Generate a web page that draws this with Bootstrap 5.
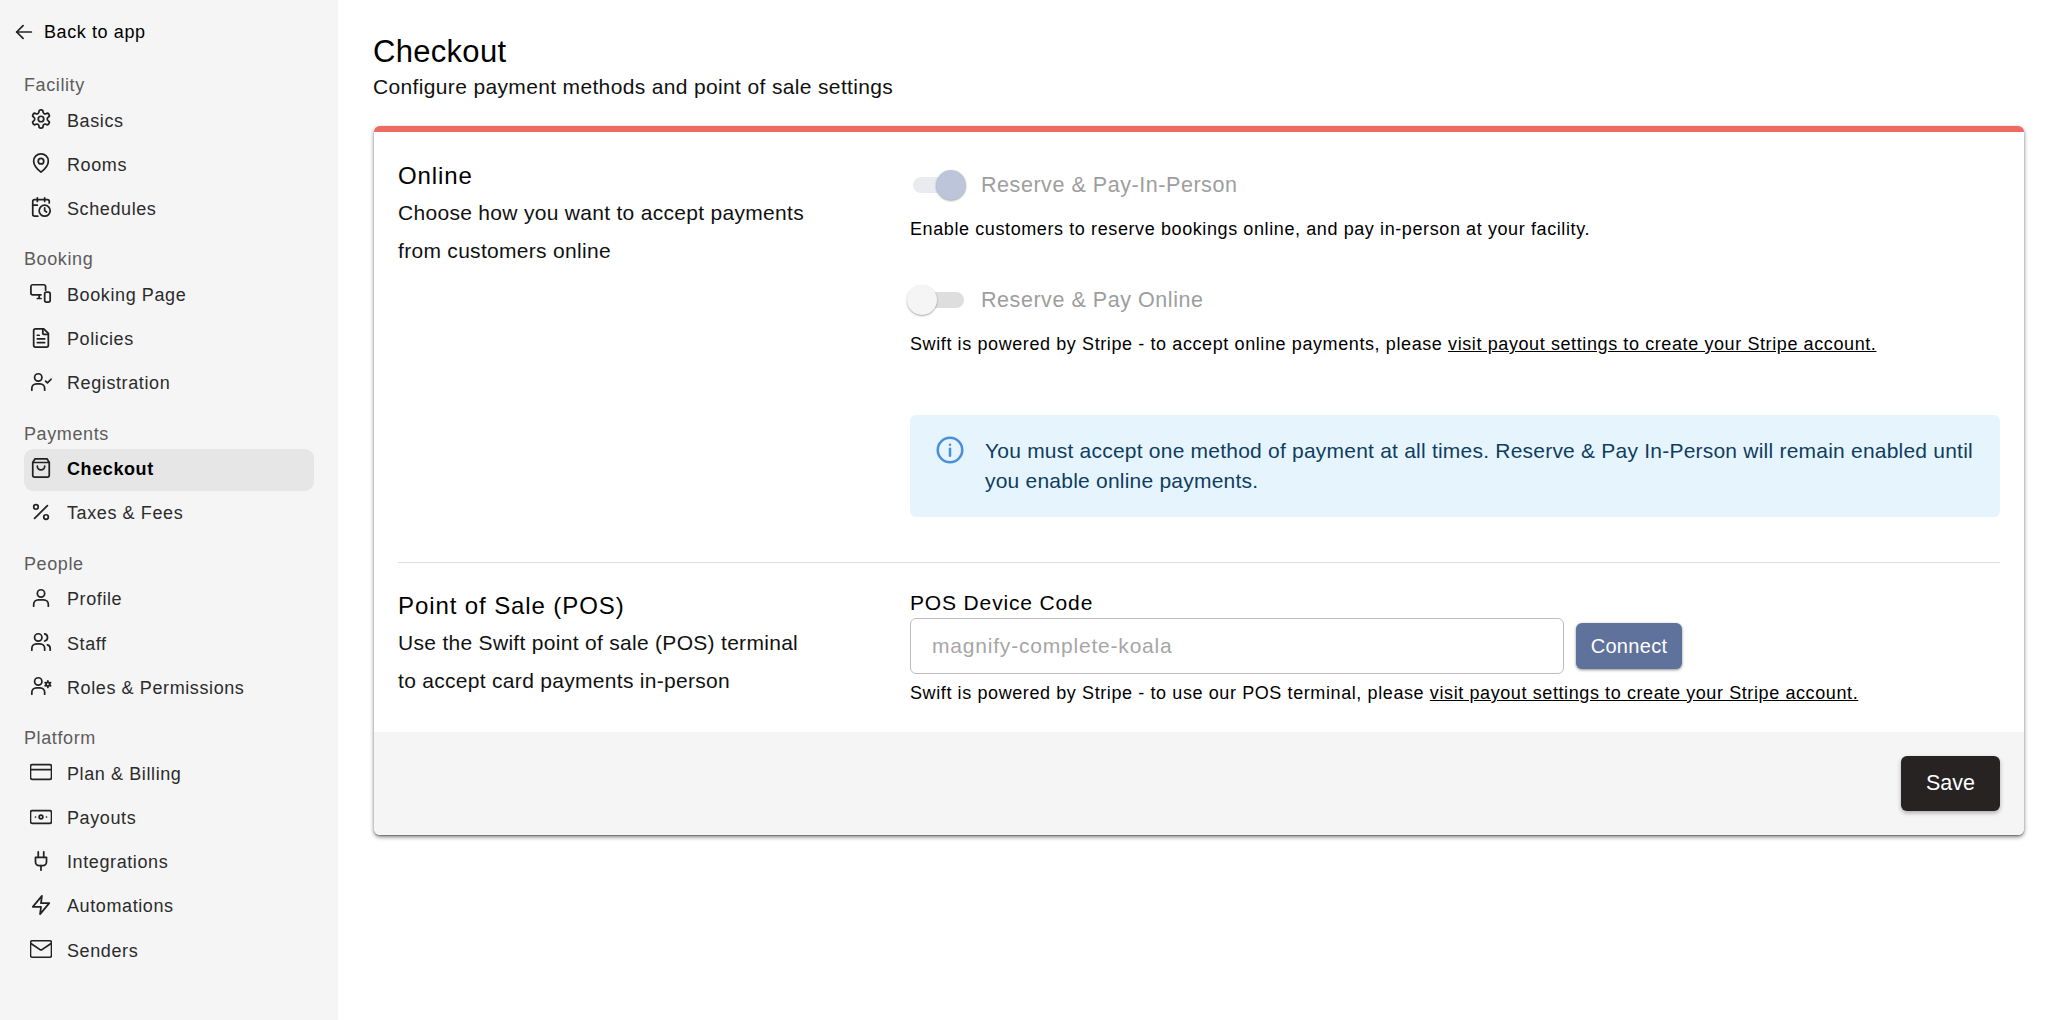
<!DOCTYPE html>
<html lang="en">
<head>
<meta charset="utf-8">
<title>Checkout</title>
<link href="https://cdn.jsdelivr.net/npm/bootstrap@5.3.0/dist/css/bootstrap.min.css" rel="stylesheet">
<style>
html,body{height:100%}
body{font-family:"Liberation Sans",Arial,sans-serif;color:#000;letter-spacing:.3px;background:#fff;overflow:hidden}
.shell{height:1020px}
.side{width:338px;flex:none;background:#f5f5f5;padding:21px 24px 0 0;height:1020px}
.backlink{display:flex;align-items:center;height:22px;margin-left:13px;color:#000;text-decoration:none;font-size:18px;letter-spacing:.6px}
.backlink svg{width:22px;height:22px;margin-right:9px}
.grp-title{margin:17px 0 0 24px;font-size:18px;letter-spacing:.6px;line-height:24px;color:#5c5c5c;height:24px}
.grp-title.first{margin-top:30px}
.side-item{display:flex;align-items:center;height:42px;margin:2.2px 0 0 24px;padding-left:6px;border-radius:9px;color:#2b2b2b;font-size:18px;letter-spacing:.6px;text-decoration:none}
.grp-title+.side-item{margin-top:3px}
.side-item svg{width:22px;height:22px;margin-right:15px;flex:none;position:relative;top:-2px}
.side-item.on{background:#e6e6e6;color:#000;font-weight:700}
.maincol{padding:32px 28px 0 35px;min-width:0}
.pg-title{font-size:31px;line-height:40px;margin:0;font-weight:400;letter-spacing:.3px}
.pg-sub{font-size:21px;line-height:28px;margin:1px 0 0;letter-spacing:.35px;color:#111}
.panel{margin:25px 0 0 1px;height:709px;border:0;border-radius:6px;border-top:6px solid #ee6a5f;box-shadow:0 2px 4px rgba(0,0,0,.5),0 1px 1px rgba(0,0,0,.25);overflow:hidden;background:#fff}
.panel-body{padding:24px 24px 0;height:600px}
.lcol{width:512px;flex:none}
.sec-h{font-size:24px;line-height:32px;margin:4px 0 0;font-weight:400;letter-spacing:.9px}
.sec-d{font-size:21px;line-height:38px;margin:2px 0 0;letter-spacing:.3px;font-weight:400;color:#111}
.rcol{flex:1;min-width:0}
.rcol.top{padding-top:13px}
.sw-row{display:flex;align-items:center;height:32px}
.sw{width:54px;height:32px;position:relative;flex:none;margin-right:17px}
.sw-track{position:absolute;right:0;top:8px;height:16px;border-radius:8px;background:#e9ebf1;left:3px}
.sw-track.off{background:#dedede}
.sw-knob{position:absolute;top:1px;width:30px;height:30px;border-radius:50%;box-shadow:0 1px 2px rgba(0,0,0,.35)}
.sw-knob.onk{left:26px;background:#bcc5d9}
.sw-knob.offk{left:-3px;background:#f5f5f5}
.sw-lab{font-size:21.5px;color:#9e9e9e;letter-spacing:.55px}
.hint{font-size:18px;line-height:24px;margin:16px 0 0;letter-spacing:.6px;white-space:nowrap}
.hint a{color:#000}
.sw-next{margin-top:43px}
.infobox{margin-top:59px;height:102px;background:#e6f5fd;border-radius:6px;padding:21px 20px 0 26px;color:#0f3d5f;font-size:21px;line-height:30px;letter-spacing:.22px}
.infobox svg{width:28px;height:28px;flex:none;margin-right:21px}
.sep{border:0;border-top:1px solid #ddd;opacity:1;margin:45px 0 0}
.pos-wrap{margin-top:26px}
.pos-wrap .sec-h{margin:1px 0 1px}
.poslab{font-size:21px;line-height:28px;letter-spacing:.85px;margin:0 0 1px}
.codeinput{width:654px;height:56px;border:1px solid #bdbdbd;border-radius:6px;font-size:21px;padding:0 21px;letter-spacing:.8px;box-shadow:none}
.codeinput::placeholder{color:#a6a6a6;opacity:1}
.btn-conn{height:46px;width:106px;margin-left:12px;background:#5f729c;border:0;border-radius:6px;color:#fff;font-size:20px;padding:0;letter-spacing:.3px;box-shadow:0 1px 3px rgba(0,0,0,.45)}
.hint.pos-hint{margin-top:7px}
.panel-foot{background:#f5f5f5;height:103px;padding:24px 24px 0 0}
.btn-save{width:99px;height:55px;background:#262322;border:0;border-radius:6px;color:#fff;font-size:21.5px;padding:0;box-shadow:0 2px 4px rgba(0,0,0,.3)}
</style>
</head>
<body>
<div class="shell d-flex">
<nav class="side">
<a class="backlink" href="#"><svg viewBox="0 0 24 24" fill="none" stroke="#222" stroke-width="1.900" stroke-linecap="round" stroke-linejoin="round"><path d="M20 12H4"/><path d="M11 5l-7 7 7 7"/></svg>Back to app</a>

<div class="grp-title first">Facility</div>
<a class="side-item" href="#"><svg viewBox="0 0 24 24" fill="none" stroke="#222" stroke-width="1.900" stroke-linecap="round" stroke-linejoin="round"><path d="M12.22 2h-.44a2 2 0 0 0-2 2v.18a2 2 0 0 1-1 1.73l-.43.25a2 2 0 0 1-2 0l-.15-.08a2 2 0 0 0-2.73.73l-.22.38a2 2 0 0 0 .73 2.73l.15.1a2 2 0 0 1 1 1.72v.51a2 2 0 0 1-1 1.74l-.15.09a2 2 0 0 0-.73 2.73l.22.38a2 2 0 0 0 2.73.73l.15-.08a2 2 0 0 1 2 0l.43.25a2 2 0 0 1 1 1.73V20a2 2 0 0 0 2 2h.44a2 2 0 0 0 2-2v-.18a2 2 0 0 1 1-1.73l.43-.25a2 2 0 0 1 2 0l.15.08a2 2 0 0 0 2.73-.73l.22-.39a2 2 0 0 0-.73-2.73l-.15-.08a2 2 0 0 1-1-1.74v-.5a2 2 0 0 1 1-1.74l.15-.09a2 2 0 0 0 .73-2.73l-.22-.38a2 2 0 0 0-2.73-.73l-.15.08a2 2 0 0 1-2 0l-.43-.25a2 2 0 0 1-1-1.73V4a2 2 0 0 0-2-2z"/><circle cx="12" cy="12" r="3"/></svg>Basics</a>
<a class="side-item" href="#"><svg viewBox="0 0 24 24" fill="none" stroke="#222" stroke-width="1.900" stroke-linecap="round" stroke-linejoin="round"><path d="M20 10c0 5-5.5 10-8 12-2.500-2-8-7-8-12a8 8 0 0 1 16 0z"/><circle cx="12" cy="10" r="3"/></svg>Rooms</a>
<a class="side-item" href="#"><svg viewBox="0 0 24 24" fill="none" stroke="#222" stroke-width="1.900" stroke-linecap="round" stroke-linejoin="round"><path d="M21 7.500V6a2 2 0 0 0-2-2H5a2 2 0 0 0-2 2v14a2 2 0 0 0 2 2h3.500"/><path d="M16 2v4M8 2v4M3 10h5"/><circle cx="16" cy="16" r="6"/><path d="M16 13v3l2 1.500"/></svg>Schedules</a>

<div class="grp-title">Booking</div>
<a class="side-item" href="#"><svg viewBox="0 0 24 24" fill="none" stroke="#222" stroke-width="1.900" stroke-linecap="round" stroke-linejoin="round"><path d="M17 9V5a2 2 0 0 0-2-2H3a2 2 0 0 0-2 2v7a2 2 0 0 0 2 2h9"/><path d="M8 18h4M10 14v4"/><rect x="16" y="11" width="6" height="11" rx="2"/></svg>Booking Page</a>
<a class="side-item" href="#"><svg viewBox="0 0 24 24" fill="none" stroke="#222" stroke-width="1.900" stroke-linecap="round" stroke-linejoin="round"><path d="M15 2H6a2 2 0 0 0-2 2v16a2 2 0 0 0 2 2h12a2 2 0 0 0 2-2V7z"/><path d="M14 2v5a1 1 0 0 0 1 1h5"/><path d="M10 9H8M16 13H8M16 17H8"/></svg>Policies</a>
<a class="side-item" href="#"><svg viewBox="0 0 24 24" fill="none" stroke="#222" stroke-width="1.900" stroke-linecap="round" stroke-linejoin="round"><circle cx="9" cy="7" r="4"/><path d="M2 21v-2a5 5 0 0 1 5-5h4a5 5 0 0 1 5 5v2"/><path d="M17 11l2 2 4-4"/></svg>Registration</a>

<div class="grp-title">Payments</div>
<a class="side-item on" href="#"><svg viewBox="0 0 24 24" fill="none" stroke="#222" stroke-width="1.900" stroke-linecap="round" stroke-linejoin="round"><path d="M5.500 2h13L21 6v14a2 2 0 0 1-2 2H5a2 2 0 0 1-2-2V6z"/><path d="M3 6h18"/><path d="M16 10a4 4 0 0 1-8 0"/></svg>Checkout</a>
<a class="side-item" href="#"><svg viewBox="0 0 24 24" fill="none" stroke="#222" stroke-width="1.900" stroke-linecap="round" stroke-linejoin="round"><path d="M19 5L5 19"/><circle cx="6.500" cy="6.500" r="2.500"/><circle cx="17.500" cy="17.500" r="2.500"/></svg>Taxes &amp; Fees</a>

<div class="grp-title">People</div>
<a class="side-item" href="#"><svg viewBox="0 0 24 24" fill="none" stroke="#222" stroke-width="1.900" stroke-linecap="round" stroke-linejoin="round"><circle cx="12" cy="7" r="4"/><path d="M4 21v-2a5 5 0 0 1 5-5h6a5 5 0 0 1 5 5v2"/></svg>Profile</a>
<a class="side-item" href="#"><svg viewBox="0 0 24 24" fill="none" stroke="#222" stroke-width="1.900" stroke-linecap="round" stroke-linejoin="round"><circle cx="9" cy="7" r="4"/><path d="M2 21v-2a5 5 0 0 1 5-5h4a5 5 0 0 1 5 5v2"/><path d="M16 3.100a4 4 0 0 1 0 7.800"/><path d="M22 21v-2a4 4 0 0 0-3-3.900"/></svg>Staff</a>
<a class="side-item" href="#"><svg viewBox="0 0 24 24" fill="none" stroke="#222" stroke-width="1.900" stroke-linecap="round" stroke-linejoin="round"><circle cx="9" cy="7" r="4"/><path d="M2 21v-2a5 5 0 0 1 5-5h4a5 5 0 0 1 5 5v2"/><circle cx="19.500" cy="10" r="2"/><path d="M19.500 6.500v1M19.500 12.500v1M16.500 8.300l.8.500M21.700 11.200l.8.500M16.500 11.700l.8-.500M21.700 8.800l.8-.500"/></svg>Roles &amp; Permissions</a>

<div class="grp-title">Platform</div>
<a class="side-item" href="#"><svg viewBox="0 0 24 24" fill="none" stroke="#222" stroke-width="1.900" stroke-linecap="round" stroke-linejoin="round"><rect x=".5" y="4" width="23" height="16" rx="2"/><path d="M.5 9.500h23"/></svg>Plan &amp; Billing</a>
<a class="side-item" href="#"><svg viewBox="0 0 24 24" fill="none" stroke="#222" stroke-width="1.900" stroke-linecap="round" stroke-linejoin="round"><rect x=".5" y="5" width="23" height="14" rx="2"/><circle cx="12" cy="12" r="2"/><path d="M6 12h.01M18 12h.01"/></svg>Payouts</a>
<a class="side-item" href="#"><svg viewBox="0 0 24 24" fill="none" stroke="#222" stroke-width="1.900" stroke-linecap="round" stroke-linejoin="round"><path d="M12 22v-5"/><path d="M9 8V2M15 8V2"/><path d="M18 8v5a4 4 0 0 1-4 4h-4a4 4 0 0 1-4-4V8z"/></svg>Integrations</a>
<a class="side-item" href="#"><svg viewBox="0 0 24 24" fill="none" stroke="#222" stroke-width="1.900" stroke-linecap="round" stroke-linejoin="round"><path d="M13 2L3 14h9l-1 8 10-12h-9z"/></svg>Automations</a>
<a class="side-item" href="#"><svg viewBox="0 0 24 24" fill="none" stroke="#222" stroke-width="1.900" stroke-linecap="round" stroke-linejoin="round"><rect x=".5" y="3" width="23" height="18" rx="2"/><path d="M23 6l-9.970 6.700a1.940 1.940 0 0 1-2.060 0L1 6"/></svg>Senders</a>
</nav>

<main class="maincol flex-grow-1">
<h1 class="pg-title">Checkout</h1>
<p class="pg-sub">Configure payment methods and point of sale settings</p>

<section class="panel">
<div class="panel-body">
<div class="d-flex">
<div class="lcol">
<h2 class="sec-h">Online</h2>
<p class="sec-d">Choose how you want to accept payments<br>from customers online</p>
</div>
<div class="rcol top">
<div class="sw-row"><span class="sw"><span class="sw-track"></span><span class="sw-knob onk"></span></span><span class="sw-lab">Reserve &amp; Pay-In-Person</span></div>
<p class="hint">Enable customers to reserve bookings online, and pay in-person at your facility.</p>
<div class="sw-row sw-next"><span class="sw"><span class="sw-track off"></span><span class="sw-knob offk"></span></span><span class="sw-lab">Reserve &amp; Pay Online</span></div>
<p class="hint">Swift is powered by Stripe - to accept online payments, please <a href="#">visit payout settings to create your Stripe account.</a></p>
<div class="infobox d-flex">
<svg viewBox="0 0 24 24" fill="none" stroke="#4a90d9" stroke-width="2.200" stroke-linecap="round"><circle cx="12" cy="12" r="10.500"/><path d="M12 11v6"/><path d="M12 7.500h.01"/></svg>
<div>You must accept one method of payment at all times. Reserve &amp; Pay In-Person will remain enabled until you enable online payments.</div>
</div>
</div>
</div>
<hr class="sep">
<div class="d-flex pos-wrap">
<div class="lcol">
<h2 class="sec-h">Point of Sale (POS)</h2>
<p class="sec-d">Use the Swift point of sale (POS) terminal<br>to accept card payments in-person</p>
</div>
<div class="rcol">
<label class="poslab d-block" for="poscode">POS Device Code</label>
<div class="d-flex align-items-center">
<input id="poscode" class="form-control codeinput" type="text" placeholder="magnify-complete-koala">
<button class="btn btn-conn" type="button">Connect</button>
</div>
<p class="hint pos-hint">Swift is powered by Stripe - to use our POS terminal, please <a href="#">visit payout settings to create your Stripe account.</a></p>
</div>
</div>
</div>
<div class="panel-foot d-flex justify-content-end align-items-start">
<button class="btn btn-save" type="button">Save</button>
</div>
</section>
</main>
</div>
<script src="https://cdn.jsdelivr.net/npm/bootstrap@5.3.0/dist/js/bootstrap.bundle.min.js"></script>
</body>
</html>
